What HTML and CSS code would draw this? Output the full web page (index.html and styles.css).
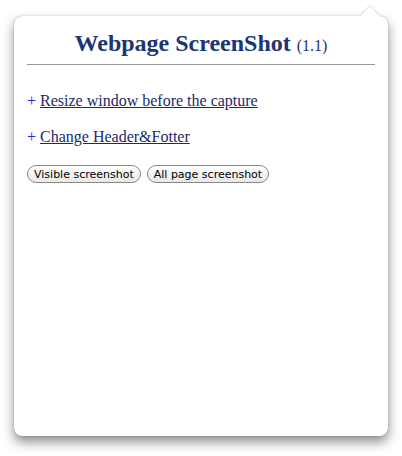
FILE: index.html
```html
<!DOCTYPE html>
<html lang="en">
<head>
  <meta charset="UTF-8">
  <title>Webpage ScreenShot</title>
  <link rel="stylesheet" href="styles.css">
</head>
<body>
  <div class="popup">
    <div class="arrow"></div>
    <h1 class="title">Webpage ScreenShot <span class="version">(1.1)</span></h1>
    <hr class="rule">
    <p class="option"><span class="plus">+</span> <a href="#">Resize window before the capture</a></p>
    <p class="option"><span class="plus">+</span> <a href="#">Change Header&amp;Fotter</a></p>
    <div class="actions">
      <button class="btn">Visible screenshot</button>
      <button class="btn">All page screenshot</button>
    </div>
  </div>
</body>
</html>
```

FILE: styles.css
```css
* {
  box-sizing: border-box;
}
body {
  margin: 0;
  padding: 16px 14px 20px;
  background: #fff;
  font-family: "Liberation Serif", "Times New Roman", serif;
}
.popup {
  position: relative;
  width: 374px;
  height: 420px;
  padding: 13px 13px;
  background: #fff;
  border-radius: 8px;
  box-shadow: 0 0 1px rgba(0, 0, 0, 0.5), 0 6px 12px rgba(0, 0, 0, 0.45);
}
.arrow {
  position: absolute;
  top: -7px;
  right: 11px;
  width: 14px;
  height: 14px;
  background: #fff;
  transform: rotate(45deg);
  box-shadow: -1px -1px 1px rgba(0, 0, 0, 0.12);
}
.title {
  margin: 0;
  text-align: center;
  font-size: 24px;
  line-height: 28px;
  color: #1b3674;
}
.version {
  font-size: 16px;
  font-weight: normal;
}
.rule {
  margin: 4px 0 0;
  border: 0;
  border-top: 1px solid #999;
}
.option {
  margin: 29px 0 0;
  font-size: 16px;
  line-height: 14px;
}
.option + .option {
  margin-top: 22px;
}
.plus {
  color: #2424ff;
}
.option a {
  color: #1a2a6c;
}
.actions {
  display: flex;
  gap: 6px;
  margin-top: 21px;
}
.btn {
  height: 18px;
  padding: 0 6px;
  border: 1px solid #888;
  border-radius: 9px;
  background: linear-gradient(#fff, #e8e8e8);
  font-family: "DejaVu Sans", sans-serif;
  font-size: 11px;
  color: #000;
}
```
